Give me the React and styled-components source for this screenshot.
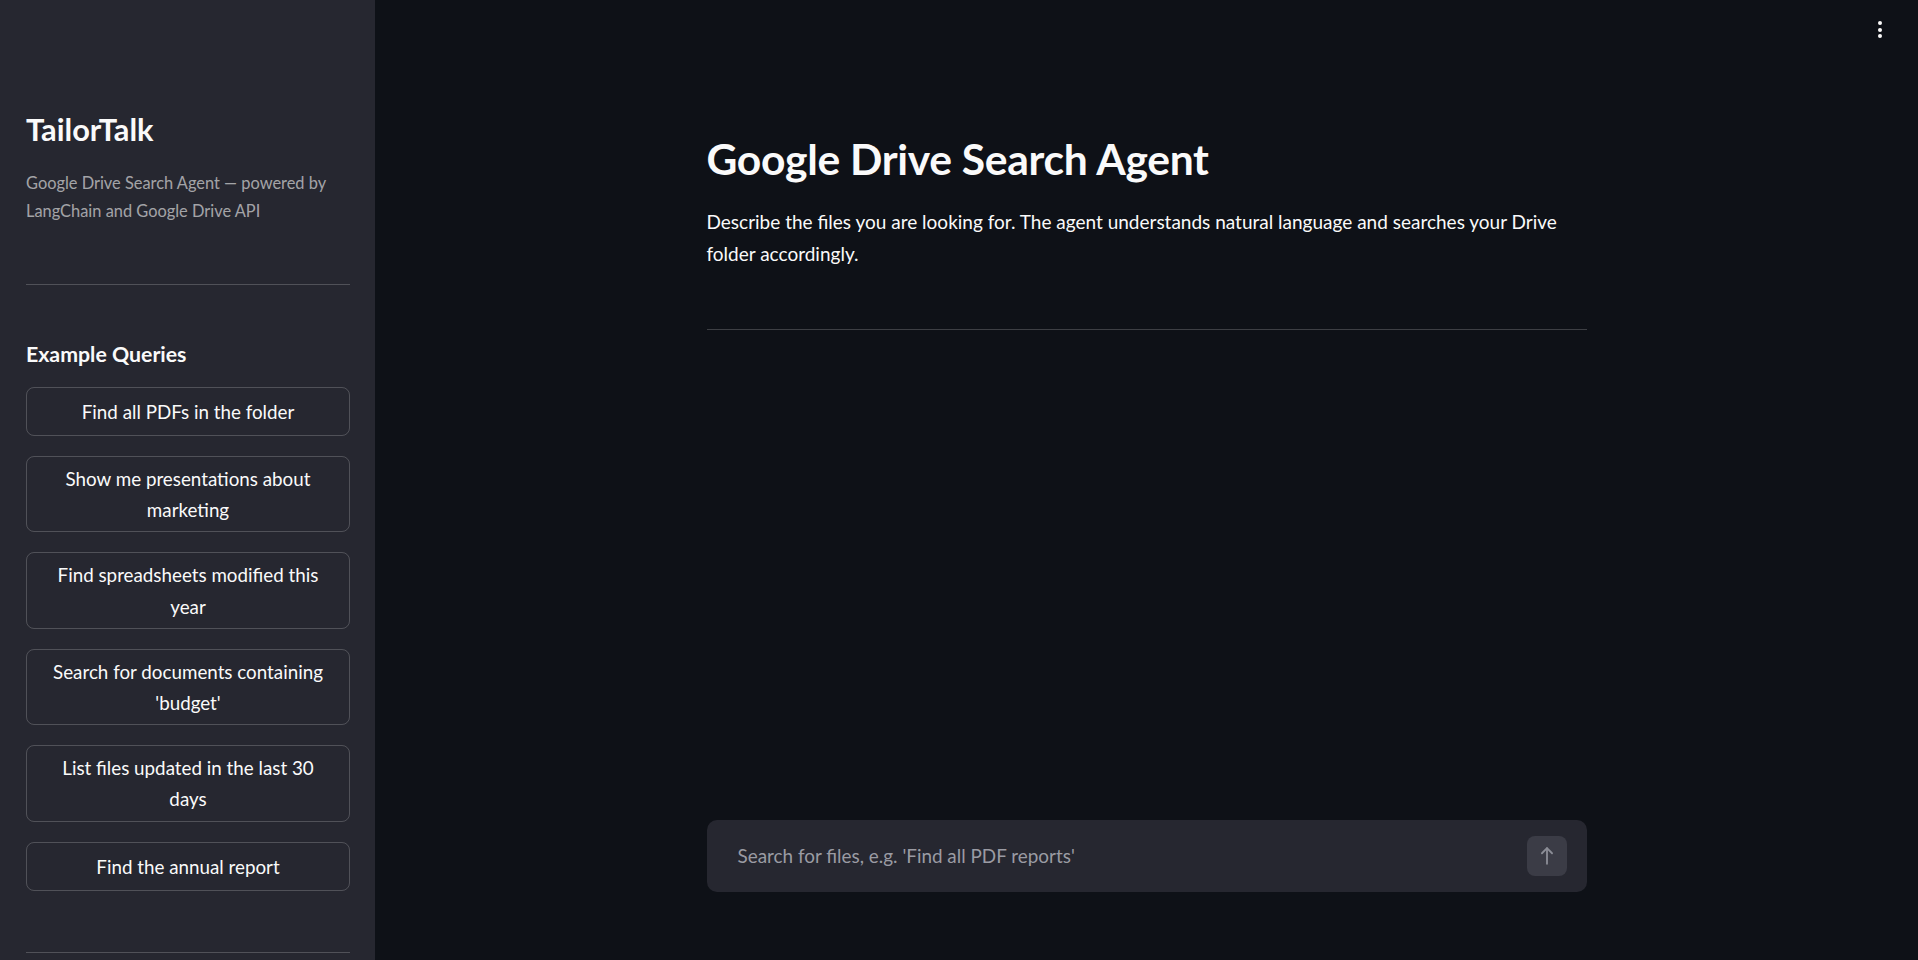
import React from 'react'
import styled, { createGlobalStyle } from 'styled-components'

const queries = [
  'Find all PDFs in the folder',
  'Show me presentations about marketing',
  'Find spreadsheets modified this year',
  "Search for documents containing 'budget'",
  'List files updated in the last 30 days',
  'Find the annual report',
]

const GlobalStyle = createGlobalStyle`
  html, body {
    margin: 0;
    padding: 0;
    background: #0e1117;
    color: #fafafa;
    font-family: Lato, "Noto Sans", sans-serif;
  }
  * { box-sizing: border-box; }
`

const Shell = styled.div`
  display: flex;
  height: 100vh;
  overflow: hidden;
`

const Sidebar = styled.aside`
  width: 375px;
  flex-shrink: 0;
  background: #262730;
  padding: 112px 25px 0 26px;
  display: flex;
  flex-direction: column;
`

const Brand = styled.h1`
  margin: 0;
  font-size: 30.8px;
  line-height: 36px;
  font-weight: 700;
  color: #fafafa;
`

const Caption = styled.p`
  margin: 21px 0 0;
  font-size: 16.4px;
  line-height: 27.5px;
  color: rgba(250, 250, 250, 0.6);
`

const Rule = styled.hr`
  border: 0;
  height: 1px;
  background: rgba(250, 250, 250, 0.2);
  margin: ${p => p.$top || 0}px 0 0;
`

const SectionTitle = styled.h3`
  margin: 55px 0 0;
  font-size: 21.3px;
  line-height: 28px;
  font-weight: 700;
  color: #fafafa;
`

const QueryList = styled.div`
  margin-top: 19px;
  display: flex;
  flex-direction: column;
  gap: 20px;
`

const QueryButton = styled.button`
  min-height: 49px;
  padding: 6px 20px;
  border: 1px solid rgba(250, 250, 250, 0.2);
  border-radius: 8px;
  background: transparent;
  color: #fafafa;
  font-family: inherit;
  font-size: 18.8px;
  line-height: 31.2px;
  text-align: center;
  cursor: pointer;
`

const Main = styled.main`
  flex: 1;
  position: relative;
  display: flex;
  justify-content: center;
`

const Column = styled.div`
  width: 880px;
  display: flex;
  flex-direction: column;
  padding-top: 134px;
  padding-bottom: 68px;
`

const Title = styled.h1`
  margin: 0;
  font-size: 42.6px;
  line-height: 50px;
  font-weight: 700;
  color: #fafafa;
  letter-spacing: -0.3px;
`

const Lead = styled.p`
  margin: 22px 0 0;
  font-size: 19px;
  line-height: 31.5px;
  color: #fafafa;
`

const Spacer = styled.div`
  flex: 1;
`

const ChatInput = styled.div`
  height: 72px;
  border-radius: 10px;
  background: #262730;
  display: flex;
  align-items: center;
  padding: 0 20px 0 31px;
`

const Placeholder = styled.span`
  flex: 1;
  font-size: 18.9px;
  color: #9a9ba3;
  margin-top: -2px;
`

const SendButton = styled.button`
  width: 40px;
  height: 40px;
  border: 0;
  border-radius: 8px;
  background: #3b3c46;
  display: flex;
  align-items: center;
  justify-content: center;
  padding: 0;
`

const MenuDots = styled.div`
  position: absolute;
  top: 21px;
  right: 36px;
  display: flex;
  flex-direction: column;
  gap: 2.6px;
`

const Dot = styled.span`
  width: 4px;
  height: 4px;
  border-radius: 50%;
  background: #fafafa;
`

const ArrowUp = () => (
  <svg width="22" height="22" viewBox="0 0 24 24" fill="none" stroke="#8b8d96" strokeWidth="2" strokeLinecap="round" strokeLinejoin="round">
    <path d="M12 20.5V3.5" />
    <path d="M6.5 9L12 3.5 17.5 9" />
  </svg>
)

const App = () => (
  <>
    <GlobalStyle />
    <Shell>
      <Sidebar>
        <Brand>TailorTalk</Brand>
        <Caption>
          Google Drive Search Agent — powered by LangChain and Google Drive API
        </Caption>
        <Rule $top={60} />
        <SectionTitle>Example Queries</SectionTitle>
        <QueryList>
          {queries.map(q => (
            <QueryButton key={q}>{q}</QueryButton>
          ))}
        </QueryList>
        <Rule $top={61} />
      </Sidebar>
      <Main>
        <MenuDots>
          <Dot />
          <Dot />
          <Dot />
        </MenuDots>
        <Column>
          <Title>Google Drive Search Agent</Title>
          <Lead>
            Describe the files you are looking for. The agent understands natural language and searches your Drive folder accordingly.
          </Lead>
          <Rule $top={60} />
          <Spacer />
          <ChatInput>
            <Placeholder>Search for files, e.g. 'Find all PDF reports'</Placeholder>
            <SendButton>
              <ArrowUp />
            </SendButton>
          </ChatInput>
        </Column>
      </Main>
    </Shell>
  </>
)

export default App
